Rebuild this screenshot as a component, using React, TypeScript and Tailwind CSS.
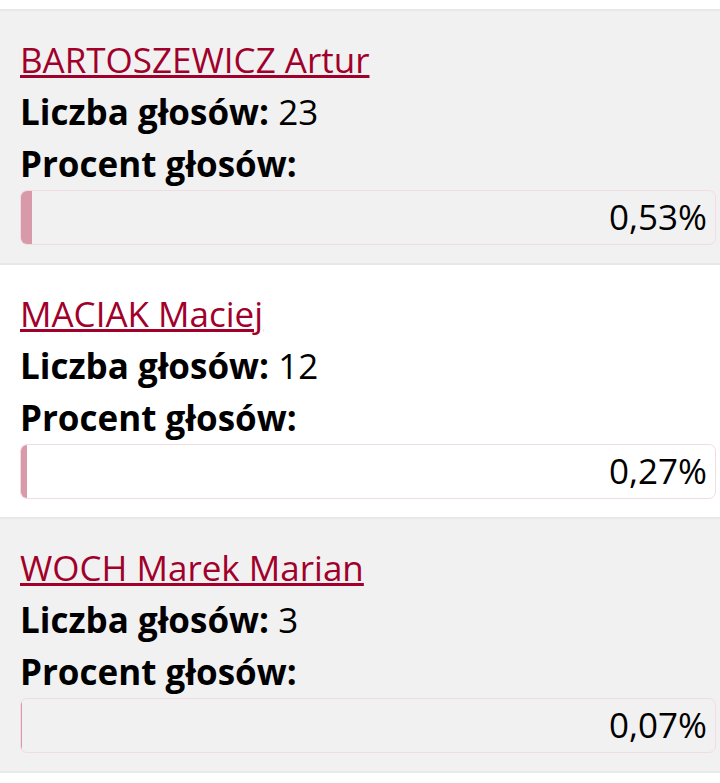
const candidates = [
  { name: 'BARTOSZEWICZ Artur', votes: 23, pct: 0.53 },
  { name: 'MACIAK Maciej', votes: 12, pct: 0.27 },
  { name: 'WOCH Marek Marian', votes: 3, pct: 0.07 },
]

export default function App() {
  return (
    <div className="min-h-[783px] bg-white pt-[9px] font-['Open_Sans',sans-serif] text-black">
      <div className="border-t-2 border-[#e8e8e8]">
        {candidates.map((c, i) => (
          <div
            key={c.name}
            className={`border-b-2 border-[#e8e8e8] pl-5 pr-1 pt-[23px] pb-[18px] ${i % 2 === 0 ? 'bg-[#f1f1f1]' : 'bg-white'}`}
          >
            <a href="#" className="block w-fit text-[35px] leading-[52px] text-[#a1002b] underline decoration-[3px] underline-offset-[2px]">
              {c.name}
            </a>
            <p className="text-[35px] leading-[52px]">
              <b className="font-bold">Liczba głosów:</b> {c.votes}
            </p>
            <p className="text-[35px] leading-[52px] font-bold">Procent głosów:</p>
            <div className="relative h-[55px] rounded-[7px] border border-[#f2dce3] overflow-hidden">
              <div
                className="absolute left-0 top-0 bottom-0 bg-[#d899a9]"
                style={{ width: `${c.pct * 21}px` }}
              />
              <span className="absolute right-[8px] top-0 bottom-0 flex items-center text-[35px]">
                {c.pct.toFixed(2).replace('.', ',')}%
              </span>
            </div>
          </div>
        ))}
      </div>
    </div>
  )
}
